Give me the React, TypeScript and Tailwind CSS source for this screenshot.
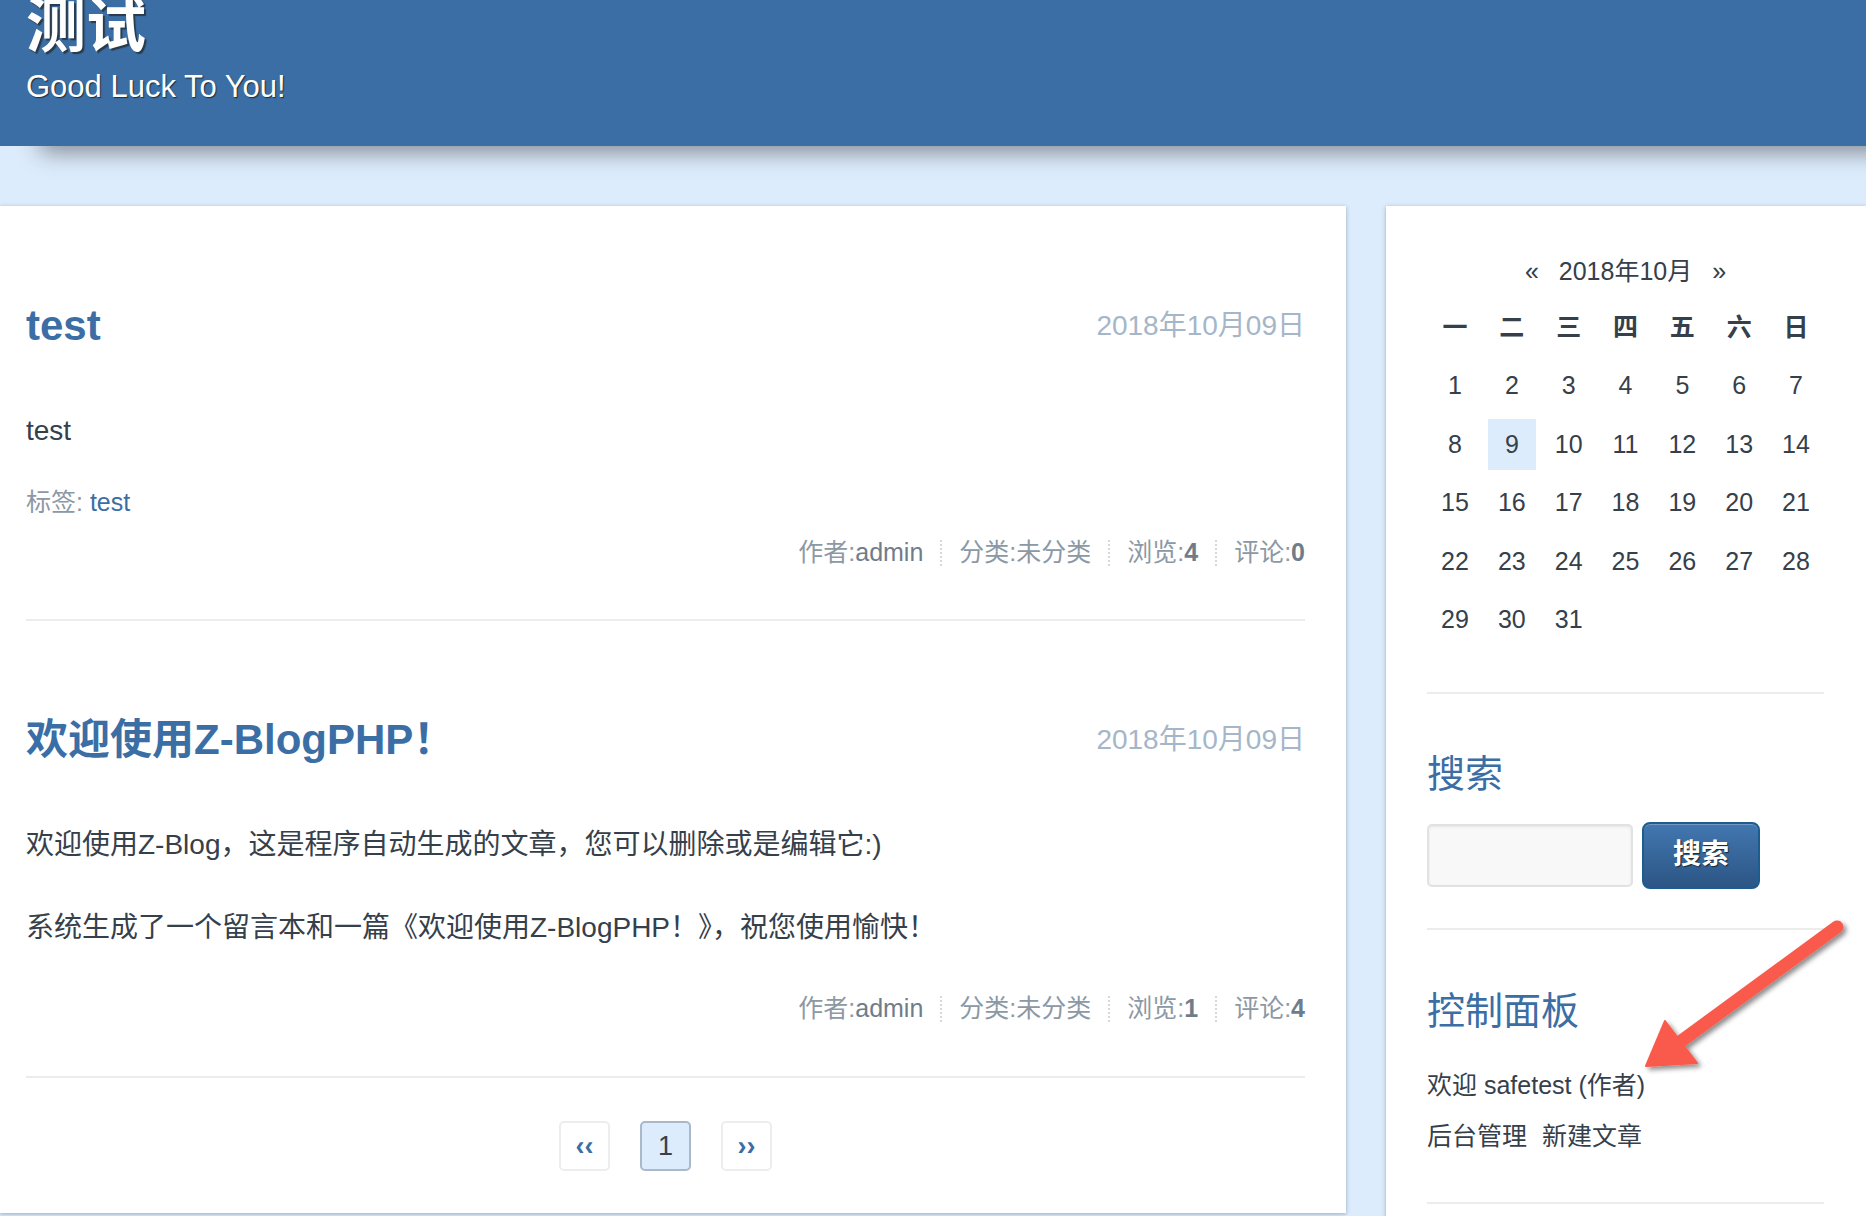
const FONT = "font-['Liberation_Sans','Noto_Sans_CJK_SC',sans-serif]";

function Meta({ views, comments }: { views: string; comments: string }) {
  const sep = <span className="mx-[17px] h-[26px] border-l-2 border-dotted border-[#d8d8d8]" />;
  return (
    <div className="flex h-[36px] items-center justify-end text-[25px] text-[#8c98a4]">
      <span>
        作者:<b className="font-medium text-[#6f7d8b]">admin</b>
      </span>
      {sep}
      <span>分类:未分类</span>
      {sep}
      <span>
        浏览:<b className="font-semibold text-[#6f7d8b]">{views}</b>
      </span>
      {sep}
      <span>
        评论:<b className="font-semibold text-[#6f7d8b]">{comments}</b>
      </span>
    </div>
  );
}

function PostHead({ title }: { title: string }) {
  return (
    <div className="flex h-[48px] items-center justify-between">
      <h2 className="text-[42px] font-bold leading-[48px] text-[#3a6ea5]">{title}</h2>
      <span className="text-[28px] text-[#a5b6c8]">2018年10月09日</span>
    </div>
  );
}

function Calendar() {
  const days: number[] = Array.from({ length: 31 }, (_, i) => i + 1);
  const week = ["一", "二", "三", "四", "五", "六", "日"];
  return (
    <div className="ml-[4px] w-[389px]">
      <div className="flex h-[36px] items-center justify-center text-[25px] text-[#35404b]">
        <span>«</span>
        <span className="px-[20px]">2018年10月</span>
        <span>»</span>
      </div>
      <div className="mt-[12px] grid grid-cols-7 gap-x-[8.8px] gap-y-[7.5px] text-[25px] text-[#35404b]">
        {week.map((w) => (
          <div key={w} className="flex h-[51px] items-center justify-center font-bold">
            {w}
          </div>
        ))}
        {days.map((d) => (
          <div
            key={d}
            className={
              d === 9
                ? "flex h-[51px] items-center justify-center bg-[#ddecfc]"
                : "flex h-[51px] items-center justify-center"
            }
          >
            {d}
          </div>
        ))}
      </div>
    </div>
  );
}

export default function App() {
  return (
    <div className={`${FONT} relative h-[1216px] w-full overflow-hidden bg-[#ddecfc]`}>
      {/* HEADER */}
      <header className="relative z-10 h-[146px] bg-[#3a6ea5] px-[26px] shadow-[34px_12px_22px_-6px_rgba(0,0,0,0.42)]">
        <h1 className="text-[60px] font-bold leading-[54px] text-white [text-shadow:2px_2px_1px_#2a3a4a]">
          测试
        </h1>
        <p className="mt-[15px] text-[31px] leading-[36px] text-white [text-shadow:1px_1px_1px_#1e2e3e]">
          Good Luck To You!
        </p>
      </header>

      <div className="mt-[60px] flex items-start gap-[40px]">
        {/* MAIN */}
        <main className="w-[1346px] shrink-0 bg-white pb-[42px] pl-[26px] pr-[41px] pt-[96px] text-[28px] text-[#35404b] shadow-[0_1px_4px_rgba(60,90,130,0.45)]">
          <article>
            <PostHead title="test" />
            <p className="mt-[61px] leading-[40px]">test</p>
            <p className="mt-[33px] text-[25px] leading-[36px] text-[#8c98a4]">
              标签: <span className="text-[#3a6ea5]">test</span>
            </p>
            <div className="mt-[15px]">
              <Meta views="4" comments="0" />
            </div>
            <div className="mt-[48px] h-[2px] bg-[#ececec]" />
          </article>

          <article className="mt-[95px]">
            <PostHead title="欢迎使用Z-BlogPHP！" />
            <p className="mt-[61px] leading-[40px]">欢迎使用Z-Blog，这是程序自动生成的文章，您可以删除或是编辑它:)</p>
            <p className="mt-[43px] leading-[40px]">系统生成了一个留言本和一篇《欢迎使用Z-BlogPHP！》，祝您使用愉快！</p>
            <div className="mt-[43px]">
              <Meta views="1" comments="4" />
            </div>
            <div className="mt-[49px] h-[2px] bg-[#ececec]" />
          </article>

          <nav className="mt-[43px] flex justify-center gap-[30px] text-[27px]">
            <span className="flex h-[50px] w-[51px] items-center justify-center rounded-[5px] border-2 border-[#ededed] font-bold text-[#3a6ea5]">
              ‹‹
            </span>
            <span className="flex h-[50px] w-[51px] items-center justify-center rounded-[5px] border-2 border-[#a9b9c9] bg-[#ddecfc] text-[#35404b]">
              1
            </span>
            <span className="flex h-[50px] w-[51px] items-center justify-center rounded-[5px] border-2 border-[#ededed] font-bold text-[#3a6ea5]">
              ››
            </span>
          </nav>
        </main>

        {/* SIDEBAR */}
        <aside className="min-h-[1100px] flex-1 bg-white pl-[41px] pr-[42px] pt-[48px] text-[25px] text-[#35404b] shadow-[0_1px_4px_rgba(60,90,130,0.45)]">
          <Calendar />
          <div className="mt-[46px] h-[2px] w-[397px] bg-[#ececec]" />

          <h3 className="mt-[57px] text-[38px] leading-[46px] text-[#3a6ea5]">搜索</h3>
          <div className="mt-[25px] flex items-center gap-[9px]">
            <div className="h-[63px] w-[206px] rounded-[5px] border-2 border-[#e2e2e2] bg-[#f8f8f8] shadow-[inset_0_1px_3px_rgba(0,0,0,0.08)]" />
            <button className="flex h-[67px] w-[118px] items-center justify-center rounded-[8px] border-2 border-[#1d5c8f] bg-gradient-to-b from-[#4277b0] to-[#2c5685] text-[28px] font-bold text-white shadow-[inset_0_1px_0_rgba(255,255,255,0.25)] [text-shadow:1px_1px_1px_#1a2633]">
              搜索
            </button>
          </div>
          <div className="mt-[39px] h-[2px] w-[397px] bg-[#ececec]" />

          <h3 className="mt-[58px] text-[38px] leading-[46px] text-[#3a6ea5]">控制面板</h3>
          <p className="mt-[33px] leading-[36px]">欢迎 safetest (作者)</p>
          <p className="mt-[15px] flex gap-[15px] leading-[36px]">
            <span>后台管理</span>
            <span>新建文章</span>
          </p>
          <div className="mt-[48px] h-[2px] w-[397px] bg-[#ececec]" />
        </aside>
      </div>

      {/* annotation arrow */}
      <svg
        className="pointer-events-none absolute left-[1600px] top-[880px] z-20 h-[220px] w-[266px]"
        viewBox="0 0 266 220"
      >
        <defs>
          <filter id="sh" x="-20%" y="-20%" width="140%" height="140%">
            <feDropShadow dx="3" dy="3" stdDeviation="2.5" floodColor="#000" floodOpacity="0.45" />
          </filter>
        </defs>
        <g filter="url(#sh)" fill="#fa5a4b" stroke="#fa5a4b">
          <line x1="237" y1="47" x2="80" y2="162" strokeWidth="13" strokeLinecap="round" />
          <polygon points="65,141 97,183 46,186" strokeWidth="2" strokeLinejoin="round" />
        </g>
      </svg>
    </div>
  );
}
